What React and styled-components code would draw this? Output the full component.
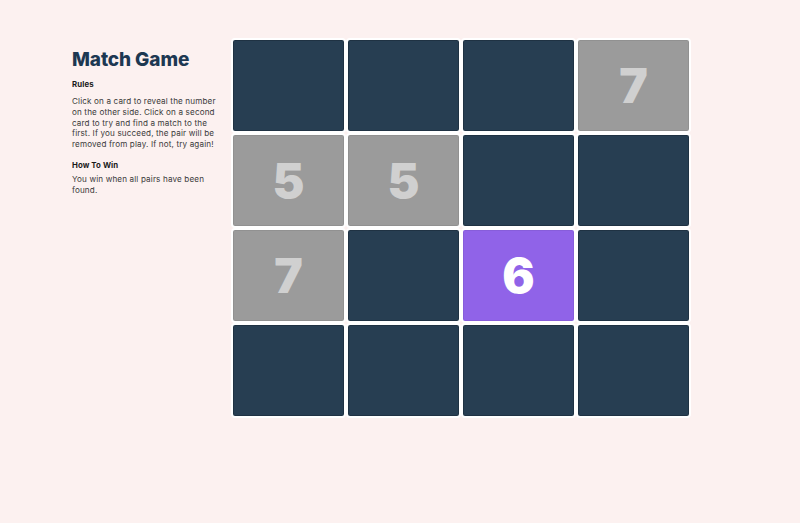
import React from "react";
import styled, { createGlobalStyle } from "styled-components";

const Global = createGlobalStyle`
  html, body { margin: 0; padding: 0; background: #fcf1f0; }
  body { font-family: "Inter", "Open Sans", sans-serif; }
`;

const Page = styled.div`
  display: flex;
  align-items: flex-start;
  padding: 38px 0 0 72px;
  min-height: 523px;
  box-sizing: border-box;
`;

const Sidebar = styled.aside`
  width: 146px;
  margin-right: 13px;
  color: #333;
`;

const Title = styled.h1`
  margin: 10px 0 0;
  font-size: 19px;
  line-height: 24px;
  font-weight: 800;
  color: #1d3852;
  letter-spacing: -0.1px;
`;

const Heading = styled.h2`
  margin: ${(p) => (p.$first ? "7px 0 6px" : "10px 0 3px")};
  font-size: 7.8px;
  line-height: 11px;
  font-weight: 700;
  color: #1a1a1a;
  letter-spacing: 0.1px;
`;

const Text = styled.p`
  margin: 0;
  font-size: 8.1px;
  line-height: 10.8px;
  letter-spacing: 0.15px;
  color: #3a3a3a;
`;

const Board = styled.div`
  display: grid;
  grid-template-columns: repeat(4, 115px);
  grid-auto-rows: 95px;
`;

const Card = styled.div`
  box-sizing: border-box;
  border: 2px solid #fff;
  border-radius: 4px;
  background: ${(p) =>
    p.$state === "active" ? "#9063e8" : p.$state === "shown" ? "#9b9b9b" : "#273e52"};
  box-shadow: inset 0 0 0 1px rgba(0, 0, 0, ${(p) => (p.$state === "h" ? 0.18 : 0.06)});
  display: flex;
  align-items: center;
  justify-content: center;
  font-family: "Inter", sans-serif;
  font-weight: 900;
  font-size: 48px;
  color: ${(p) => (p.$state === "active" ? "#ffffff" : "#d0d0d0")};
`;

const cards = [
  [null, "h"], [null, "h"], [null, "h"], ["7", "shown"],
  ["5", "shown"], ["5", "shown"], [null, "h"], [null, "h"],
  ["7", "shown"], [null, "h"], ["6", "active"], [null, "h"],
  [null, "h"], [null, "h"], [null, "h"], [null, "h"],
];

export default function App() {
  return (
    <>
      <Global />
      <Page>
        <Sidebar>
          <Title>Match Game</Title>
          <Heading $first>Rules</Heading>
          <Text>
            Click on a card to reveal the number on the other side. Click on a
            second card to try and find a match to the first. If you succeed,
            the pair will be removed from play. If not, try again!
          </Text>
          <Heading>How To Win</Heading>
          <Text>You win when all pairs have been found.</Text>
        </Sidebar>
        <Board>
          {cards.map(([n, s], i) => (
            <Card key={i} $state={s}>
              {n}
            </Card>
          ))}
        </Board>
      </Page>
    </>
  );
}
